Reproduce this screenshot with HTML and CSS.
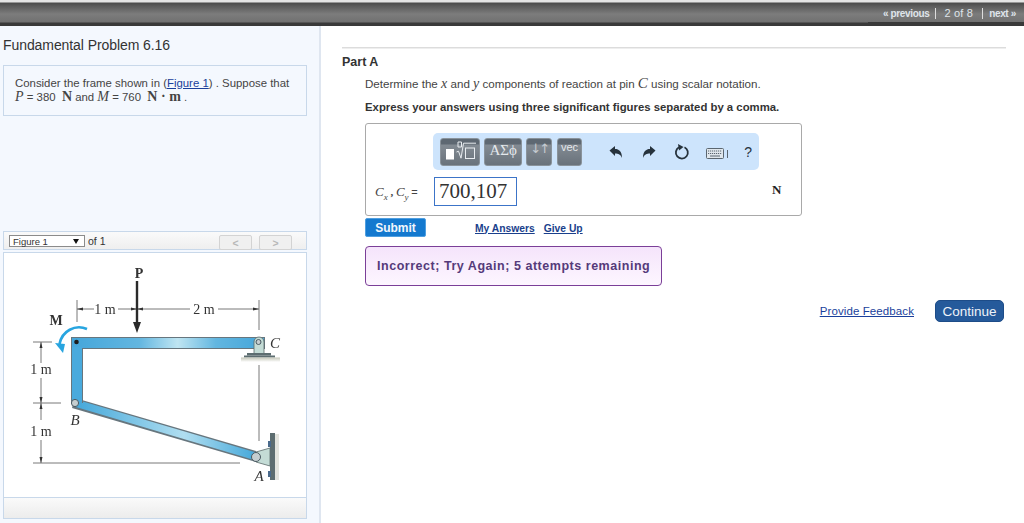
FILE: index.html
```html
<!DOCTYPE html>
<html lang="en">
<head>
<meta charset="utf-8">
<title>Fundamental Problem 6.16</title>
<link rel="stylesheet" href="styles.css">
</head>
<body>
<header class="topbar">
  <nav class="pager">
    <a class="pager-link">« previous</a>
    <span class="pager-count">2 of 8</span>
    <a class="pager-link pager-next">next »</a>
  </nav>
</header>
<div class="layout">
  <aside class="side">
    <h1 class="title">Fundamental Problem 6.16</h1>
    <div class="problem">
      Consider the frame shown in (<a class="link">Figure 1</a>) . Suppose that<br>
      <i class="mv">P</i> = 380 &nbsp;<b class="mu">N</b> and <i class="mv">M</i> = 760 &nbsp;<b class="mu">N · m</b> .
    </div>
    <div class="figbar">
      <div class="figselect"><span>Figure 1</span><span class="caret"></span></div>
      <span class="figof">of 1</span>
      <div class="fignav">
        <span class="fignav-btn">&lt;</span>
        <span class="fignav-btn">&gt;</span>
      </div>
    </div>
    <div class="figure">
      <svg class="figsvg" viewBox="4 253 302 244" width="302" height="244" xmlns="http://www.w3.org/2000/svg">
        <defs>
          <linearGradient id="beamTop" gradientUnits="userSpaceOnUse" x1="72" x2="264" y1="0" y2="0">
            <stop offset="0" stop-color="#45a6da"/><stop offset=".35" stop-color="#62b6e0"/><stop offset=".55" stop-color="#bfe5f2"/><stop offset=".75" stop-color="#62b6e0"/><stop offset="1" stop-color="#45a6da"/>
          </linearGradient>
          <linearGradient id="beamDiag" x1="0" x2="1" y1="0" y2="0">
            <stop offset="0" stop-color="#45a8da"/><stop offset=".6" stop-color="#b0def0"/><stop offset="1" stop-color="#45a8da"/>
          </linearGradient>
          <linearGradient id="shadow" x1="0" x2="0" y1="0" y2="1">
            <stop offset="0" stop-color="#c4c6b8"/><stop offset="1" stop-color="#fff"/>
          </linearGradient>
        </defs>

        <g class="dim">
          <path d="M77 300V322M259 300V330M259 365V441M77 309H94M118 309H190M218 309H259"/>
          <path d="M33 342H52M41 342V363M41 378V420M41 440V463M33 403H61M33 463H240"/>
        </g>
        <g class="dimhead">
          <path d="M77 309l6-1.500v3zM137 309l-6-1.500v3zM137 309l6-1.500v3zM259 309l-6-1.500v3z"/>
          <path d="M41 342l-1.500 6h3zM41 403l-1.500-6h3zM41 403l-1.500 6h3zM41 463l-1.500-6h3z"/>
        </g>

        <rect class="arrow-shaft" x="135.800" y="281" width="2.400" height="42"/>
        <path class="arrow-head" d="M133 322h8l-4 11z"/>

        <path class="moment" d="M87 329C75 324 62 331 59.500 344"/>
        <path class="moment-head" d="M55 343l10 1-2 9z"/>

        <path class="beam-edge" d="M75 398L256 451V462L72 408Z"/>
        <path class="beam-diag" d="M76 399.500L256 452.500V460.500L76 407Z" fill="url(#beamDiag)"/>
        <path class="beam-edge" d="M71 337H265V349H83V403H71Z"/>
        <path d="M72 338H264V348H82V404H72Z" fill="url(#beamTop)"/>
        <rect x="72" y="347" width="10" height="54" class="beam-side"/>
        <circle cx="76.500" cy="342" r="2.300" fill="#1c1c1c"/>
        <circle cx="75" cy="403" r="3.600" class="pin"/>

        <path class="bracket" d="M254 354V342a5 5 0 0 1 10 0V354Z"/>
        <circle cx="258.500" cy="342" r="2.500" class="pin"/>
        <rect x="247" y="353" width="24" height="2.500" class="plate"/>
        <rect x="244" y="355.500" width="31" height="2" class="plate"/>
        <rect x="241" y="357.500" width="39" height="4.500" fill="url(#shadow)"/>

        <path class="bracket" d="M256 452L270 448V466L256 462Z"/>
        <rect x="275" y="434" width="4" height="46" fill="#e3e4de"/>
        <rect x="270" y="433" width="5" height="47" class="plate"/>
        <rect x="268" y="441" width="3" height="6" class="bolt"/>
        <rect x="268" y="471" width="3" height="6" class="bolt"/>
        <circle cx="256" cy="457" r="4.500" class="pin"/>

        <text class="lab lab-b" x="139" y="278" text-anchor="middle">P</text>
        <text class="lab lab-b" x="56" y="325" text-anchor="middle">M</text>
        <text class="lab" x="105" y="314" text-anchor="middle">1 m</text>
        <text class="lab" x="204" y="314" text-anchor="middle">2 m</text>
        <text class="lab" x="41" y="374" text-anchor="middle">1 m</text>
        <text class="lab" x="41" y="436" text-anchor="middle">1 m</text>
        <text class="lab lab-i" x="275" y="348" text-anchor="middle">C</text>
        <text class="lab lab-i" x="75" y="425" text-anchor="middle">B</text>
        <text class="lab lab-i" x="259" y="481" text-anchor="middle">A</text>
      </svg>
    </div>
    <div class="figfoot"></div>
  </aside>

  <main class="content">
    <div class="rule"></div>
    <h2 class="part">Part A</h2>
    <div class="body">
      <p class="prompt">Determine the <i class="mv">x</i> and <i class="mv">y</i> components of reaction at pin <i class="mv mv-lg">C</i> using scalar notation.</p>
      <p class="express">Express your answers using three significant figures separated by a comma.</p>
      <div class="answer">
        <div class="toolrow">
          <div class="tools">
            <span class="tbtn tbtn-tpl">
              <svg width="38" height="26" viewBox="0 0 38 26" xmlns="http://www.w3.org/2000/svg">
                <rect x="5" y="10" width="8" height="10.500" fill="#fff"/>
                <path d="M17 3h3.500v5H17z" class="tpl-line"/>
                <path d="M15.500 13l2 -.8 2.500 7 2.500-15H35" class="tpl-line"/>
                <rect x="24.500" y="9" width="9" height="10.500" class="tpl-line"/>
              </svg>
            </span>
            <span class="tbtn tbtn-greek">ΑΣϕ</span>
            <span class="tbtn tbtn-arrows">↓↑</span>
            <span class="tbtn tbtn-vec">vec</span>
            <div class="tactions">
              <svg class="ticon" width="16" height="14" viewBox="0 0 16 14" xmlns="http://www.w3.org/2000/svg"><path d="M1.500 5.500L7 1v3c4 0 7 2.500 7 9-1.500-3.500-3.500-4.500-7-4.500V11z" fill="#26323c"/></svg>
              <svg class="ticon ticon-redo" width="16" height="14" viewBox="0 0 16 14" xmlns="http://www.w3.org/2000/svg"><path d="M14.500 5.500L9 1v3c-4 0-7 2.500-7 9 1.500-3.500 3.500-4.500 7-4.500V11z" fill="#26323c"/></svg>
              <svg class="ticon" width="18" height="18" viewBox="0 0 18 18" xmlns="http://www.w3.org/2000/svg"><path d="M11.500 4.200A6 6 0 1 1 6 4.300" fill="none" stroke="#26323c" stroke-width="1.800"/><path d="M5 1l5.500 3L6 7.500z" fill="#26323c"/></svg>
              <span class="kbd">
                <svg width="18" height="11" viewBox="0 0 18 11" xmlns="http://www.w3.org/2000/svg"><rect x=".5" y=".5" width="17" height="10" rx="1" fill="#dfe6ec" stroke="#5b6670"/><path d="M2 3h14M2 5.500h14" stroke="#5b6670" stroke-dasharray="1.200 .8"/><path d="M4 8h10" stroke="#5b6670"/></svg>
                <span class="kbd-bar"></span>
              </span>
              <span class="help">?</span>
            </div>
          </div>
        </div>
        <div class="entry">
          <span class="entry-label"><i class="sym">C<sub>x</sub></i> , <i class="sym">C<sub>y</sub></i> <span class="eq">=</span></span>
          <span class="input">700,107</span>
          <b class="unit">N</b>
        </div>
      </div>
      <div class="actions">
        <button class="submit">Submit</button>
        <a class="link link-b answers">My Answers</a>
        <a class="link link-b">Give Up</a>
      </div>
      <div class="message">Incorrect; Try Again; 5 attempts remaining</div>
    </div>
    <div class="foot">
      <a class="link feedback">Provide Feedback</a>
      <button class="continue">Continue</button>
    </div>
  </main>
</div>
</body>
</html>
```

FILE: styles.css
```css
* { box-sizing: border-box; }
html, body { margin: 0; height: 523px; overflow: hidden; }
body { background: #fff; font-family: "Liberation Sans", Arial, sans-serif; color: #333; }

.topbar {
  height: 26px;
  display: flex;
  justify-content: flex-end;
  background: linear-gradient(#e4e4e4 0, #e4e4e4 2px, #4a4a4a 3px, #5a5a5a 6px, #7c7c7c 14px, #717171 22px, #393939 23px, #393939 26px);
}
.pager {
  width: 156px;
  height: 26px;
  display: flex;
  align-items: center;
  justify-content: flex-end;
  padding-right: 8px;
  box-shadow: inset 0 -4px 0 #393939;
  font-size: 10px;
  line-height: 11px;
  font-weight: bold;
  color: #dfe4ea;
}
.pager-count { font-size: 11px; font-weight: normal; border-left: 1px solid #ddd; border-right: 1px solid #ddd; padding: 0 9px 0 8px; margin: 0 6px; letter-spacing: .2px; }
.pager-link { white-space: nowrap; letter-spacing: -.35px; }

.layout { display: flex; height: 497px; }
.side {
  width: 321px;
  flex: none;
  padding: 11px 12px 0 3px;
  background: #f4f8fe;
  border-right: 2px solid #dfe6f0;
}
.title { margin: 0 0 12px; font-size: 14px; line-height: 16px; font-weight: normal; letter-spacing: -.08px; color: #333; }
.problem {
  height: 51px;
  padding: 11px 0 0 11px;
  font-size: 11.400px;
  line-height: 13px;
  color: #444;
  white-space: nowrap;
  border: 1px solid #c8d8ea;
}
.link { color: #1a3f9c; text-decoration: underline; }
.mv { font-family: "Liberation Serif", serif; font-size: 14px; }
.mv-lg { font-size: 15px; }
.mu { font-family: "Liberation Serif", serif; font-size: 14px; }

.figbar {
  display: flex;
  align-items: flex-start;
  height: 19px;
  margin-top: 115px;
  padding: 3px 14px 0 5px;
  background: linear-gradient(#fafafa, #efefef);
  border: 1px solid #c8d8ea;
  font-size: 10.500px;
  color: #333;
}
.figselect {
  width: 76px;
  height: 12px;
  display: flex;
  align-items: center;
  justify-content: space-between;
  padding: 0 5px 0 3px;
  background: #fff;
  border: 1px solid #8b8b8b;
  font-size: 9.500px;
}
.caret { border-left: 3px solid transparent; border-right: 3px solid transparent; border-top: 5px solid #111; }
.figof { margin-left: 3px; line-height: 12px; }
.fignav { display: flex; gap: 7px; margin-left: auto; }
.fignav-btn {
  width: 33px;
  height: 15px;
  display: flex;
  align-items: center;
  justify-content: center;
  border: 1px solid #d3d3d3;
  border-radius: 2px;
  background: #f0f0f0;
  color: #b8b8b8;
  font-weight: bold;
}
.figure {
  height: 245px;
  margin-top: 2px;
  background: #fff;
  border: 1px solid #c8d8ea;
  border-bottom-width: 0;
}
.figsvg { display: block; filter: blur(.3px); }
.figfoot {
  height: 22px;
  background: linear-gradient(#fafafa, #ececec);
  border: 1px solid #c8d8ea;
}

.dim path { fill: none; stroke: #6a6a6a; stroke-width: .9; }
.dimhead path { fill: #333; }
.arrow-shaft, .arrow-head { fill: #2a2a2a; }
.moment { fill: none; stroke: #28a5e0; stroke-width: 2.600; }
.moment-head { fill: #28a5e0; }
.beam-edge { fill: #67767e; }
.beam-side { fill: #49aadd; }
.pin { fill: #c5ced0; stroke: #4a5a62; stroke-width: 1; }
.bracket { fill: #c4dcd6; stroke: #5a6a6a; stroke-width: .8; }
.plate { fill: #5d6d70; }
.bolt { fill: #4a6a8c; }
.lab { font-family: "Liberation Serif", serif; font-size: 14px; fill: #333; }
.lab-b { font-weight: bold; }
.lab-i { font-style: italic; font-size: 15px; }

.content { flex: 1; min-width: 0; padding: 21px 18px 0 21px; }
.rule { height: 1px; background: #dcdcdc; box-shadow: 0 1px 0 #eee; }
.part { margin: 7px 0 0; font-size: 12.500px; line-height: 14px; font-weight: bold; color: #333; }
.body { padding-left: 23px; }
.prompt { margin: 7px 0 0; font-size: 11.600px; line-height: 14px; color: #444; }
.express { margin: 9px 0 0; font-size: 11.350px; line-height: 14px; font-weight: bold; color: #333; }

.answer {
  width: 437px;
  height: 93px;
  margin-top: 9px;
  padding: 9px 9px 0 67px;
  border: 1px solid #a9a9a9;
  border-radius: 3px;
}
.tools {
  width: 326px;
  height: 37px;
  padding: 5px 7px;
  display: flex;
  align-items: flex-start;
  gap: 4px;
  background: #cde4fc;
  border-radius: 5px;
}
.tbtn {
  height: 28px;
  display: flex;
  justify-content: center;
  border: 1px solid #8a939b;
  border-radius: 3px;
  background: linear-gradient(#5e6872 0, #5e6872 5px, #838b93 6px, #69727b 100%);
  color: #e4e8ec;
}
.tbtn-tpl { width: 40px; }
.tbtn-greek { width: 41px; font-family: "Liberation Serif", serif; font-size: 15px; line-height: 23px; }
.tbtn-arrows { width: 27px; font-family: "DejaVu Sans", sans-serif; font-size: 13px; line-height: 20px; letter-spacing: -2px; color: #c5cbd1; }
.tbtn-vec { width: 27px; margin-left: 1px; font-size: 11px; line-height: 17px; }
.tpl-line { fill: none; stroke: #e8ecf0; stroke-width: 1; }

.tactions { flex: 1; height: 28px; display: flex; align-items: center; gap: 16px; padding-left: 22px; }
.ticon { flex: none; }
.ticon-redo { margin-left: 1px; }
.kbd { display: flex; align-items: center; gap: 3px; margin-left: -1px; margin-top: 3px; }
.kbd-bar { width: 1px; height: 8px; background: #5b6670; }
.help { font-size: 14px; color: #26323c; }

.entry { display: flex; align-items: center; margin: 7px 0 0 -67px; padding-left: 9px; }
.entry-label { width: 59px; font-family: "Liberation Serif", serif; font-size: 11px; font-weight: bold; white-space: nowrap; color: #444; }
.sym { font-size: 13px; font-weight: normal; }
.sym sub { font-size: 9px; line-height: 0; }
.eq { font-family: "Liberation Sans", sans-serif; font-weight: normal; }
.input {
  width: 83px;
  height: 29px;
  padding-left: 4px;
  border: 1px solid #3c74c8;
  background: #fff;
  font-family: "Liberation Serif", serif;
  font-size: 21px;
  line-height: 26px;
  color: #333;
}
.unit { margin: -3px 0 0 255px; font-family: "Liberation Serif", serif; font-size: 13px; color: #222; }

.actions { display: flex; align-items: center; height: 19px; margin-top: 2px; font-size: 10.300px; }
.submit {
  width: 61px;
  height: 19px;
  padding: 0;
  border: 1px solid #4f9fe0;
  border-radius: 2px;
  background: #1479cf;
  color: #f2f7fc;
  font: bold 12px "Liberation Sans", sans-serif;
}
.link-b { font-weight: bold; color: #1a3f8c; padding-top: 1px; }
.answers { margin: 0 9px 0 49px; }

.message {
  width: 297px;
  height: 40px;
  margin-top: 9px;
  padding-left: 11px;
  display: flex;
  align-items: center;
  border: 1px solid #7b3f98;
  border-radius: 4px;
  background: linear-gradient(#f5e4fb, #fdf6ff);
  font-size: 12.500px;
  font-weight: bold;
  letter-spacing: .53px;
  color: #553a7a;
  white-space: nowrap;
}

.foot { display: flex; justify-content: flex-end; align-items: center; gap: 21px; margin-top: 14px; padding-right: 2px; }
.feedback { font-size: 11.500px; letter-spacing: .1px; }
.continue {
  width: 69px;
  height: 22px;
  padding: 0;
  border: 1px solid #1d4c88;
  border-radius: 5px;
  background: #255a9b;
  color: #eef3f9;
  font: 13.500px "Liberation Sans", sans-serif;
}
```
